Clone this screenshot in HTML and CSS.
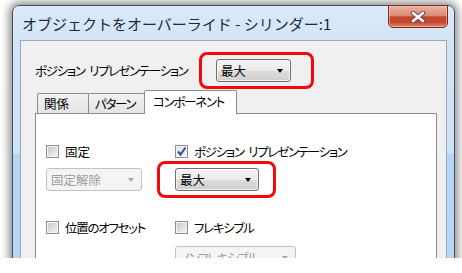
FILE: index.html
```html
<!DOCTYPE html>
<html lang="ja">
<head>
    <meta charset="UTF-8">
    <title>オブジェクトをオーバーライド - シリンダー:1</title>
    <link rel="stylesheet" href="styles.css">
</head>
<body>
<div class="screen">
    <div class="window">
        <div class="titlebar">
            <span class="title">オブジェクトをオーバーライド - シリンダー:1</span>
            <button class="close" type="button" aria-label="閉じる">
                <svg width="16" height="12" viewBox="0 0 16 12">
                    <path d="M3 2 L13 10 M13 2 L3 10" stroke="#6b4a44" stroke-width="4.6" stroke-linecap="round" fill="none"/>
                    <path d="M3 2 L13 10 M13 2 L3 10" stroke="#ffffff" stroke-width="2.6" stroke-linecap="round" fill="none"/>
                </svg>
            </button>
        </div>

        <div class="client">
            <div class="rep-row">
                <span class="rep-label">ポジション リプレゼンテーション</span>
                <div class="combo marked mark-top kanji">最大<i class="arrow"></i></div>
            </div>

            <div class="tabs">
                <div class="tab kanji">関係</div>
                <div class="tab">パターン</div>
                <div class="tab active">コンポーネント</div>
            </div>

            <div class="panel">
                <div class="group">
                    <label class="check kanji"><span class="box"></span>固定</label>
                    <div class="combo disabled w-fixed kanji">固定解除<i class="arrow"></i></div>
                </div>
                <div class="group">
                    <label class="check"><span class="box checked">
                        <svg width="11" height="11" viewBox="0 0 11 11"><path d="M2 5.5 L4.5 8.5 L9.5 1.5" stroke="#2f4f9c" stroke-width="2" fill="none"/></svg>
                    </span>ポジション リプレゼンテーション</label>
                    <div class="combo marked mark-panel w-rep kanji">最大<i class="arrow"></i></div>
                </div>
                <div class="group">
                    <label class="check"><span class="box"></span>位置のオフセット</label>
                </div>
                <div class="group wide-gap">
                    <label class="check"><span class="box"></span>フレキシブル</label>
                    <div class="combo disabled w-flex">ノンフレキシブル<i class="arrow"></i></div>
                </div>
            </div>
        </div>
    </div>
</div>
</body>
</html>
```

FILE: styles.css
```css
* {
    box-sizing: border-box;
}
body {
    margin: 0;
    background: #ffffff;
    font-family: "Noto Sans CJK JP", "Noto Sans", sans-serif;
    font-size: 12.5px;
    letter-spacing: -1.3px;
    word-spacing: 3px;
    color: #000;
    font-feature-settings: "palt";
}
.kanji {
    letter-spacing: 0;
}
.screen {
    height: 258px;
    overflow: hidden;
    padding: 5px 0 0 12px;
}

/* window frame */
.window {
    width: 443px;
    height: 320px;
    display: flex;
    flex-direction: column;
    padding: 0 7px;
    border: 1px solid #45505e;
    border-radius: 7px 7px 0 0;
    background: linear-gradient(180deg, #dbe9f8 0, #d2e4f6 40px, #cfe2f6 147px, #b6d4f4 148px, #b9d6f5 100%);
    box-shadow: 0 0 9px 3px rgba(0, 0, 0, 0.45);
}
.titlebar {
    height: 34px;
    display: flex;
    align-items: flex-start;
}
.title {
    margin: 9px 0 0 2px;
    font-size: 15px;
    line-height: 17px;
    letter-spacing: 0;
    word-spacing: 0;
    color: #1b2a40;
    font-feature-settings: normal;
}
.close {
    margin: -1px -1px 0 auto;
    width: 60px;
    height: 23px;
    padding: 0;
    display: flex;
    align-items: center;
    justify-content: center;
    border: 1px solid #7c2c21;
    border-radius: 0 0 5px 5px;
    background: linear-gradient(180deg, #eab1a3 0%, #de8d79 45%, #c6452d 52%, #c44a32 78%, #de8a6c 100%);
    box-shadow: inset 0 0 0 1px rgba(255, 210, 200, 0.5);
}
.client {
    flex: 1;
    background: #f0f0f0;
    border: 1px solid #9aa9bb;
}

/* top row */
.rep-row {
    display: flex;
    align-items: center;
    margin-top: 18px;
    padding-left: 14px;
}
.rep-label {
    width: 181px;
    white-space: nowrap;
}

/* combo boxes */
.combo {
    height: 23px;
    width: 75px;
    display: flex;
    align-items: center;
    justify-content: space-between;
    padding: 0 7px 0 4px;
    white-space: nowrap;
    border: 1px solid #707070;
    border-radius: 3px;
    background: linear-gradient(180deg, #f3f3f3 0%, #ebebeb 50%, #dddddd 51%, #cfcfcf 100%);
    box-shadow: inset 0 0 0 1px rgba(255, 255, 255, 0.7);
}
.arrow {
    width: 0;
    height: 0;
    border-left: 3.5px solid transparent;
    border-right: 3.5px solid transparent;
    border-top: 4px solid #000;
}
.combo.disabled {
    color: #9c9c9c;
    border-color: #c2c2c2;
    background: #f4f4f4;
    box-shadow: none;
}
.combo.disabled .arrow {
    border-top-color: #a8a8a8;
}
.w-fixed {
    width: 96px;
}
.w-rep {
    width: 84px;
}
.w-flex {
    width: 121px;
}

/* red annotation rings */
.marked {
    position: relative;
}
.marked::after {
    content: "";
    position: absolute;
    border: 3px solid #f20a0a;
    border-radius: 8px;
}
.mark-top::after {
    top: -8px;
    bottom: -8px;
    left: -18px;
    right: -24px;
}
.mark-panel::after {
    top: -8px;
    bottom: -8px;
    left: -19px;
    right: -18px;
}

/* tabs */
.tabs {
    display: flex;
    align-items: flex-end;
    height: 23px;
    margin: 8px 0 0 16px;
}
.tab {
    height: 20px;
    width: 52px;
    padding: 2px 0 0 6px;
    line-height: 16px;
    white-space: nowrap;
    border: 1px solid #898c95;
    border-bottom: none;
    border-radius: 2px 2px 0 0;
    background: linear-gradient(180deg, #f2f2f2 0%, #e4e4e4 100%);
}
.tab + .tab {
    margin-left: -1px;
    width: 57px;
}
.tab.active {
    width: 93px;
    height: 24px;
    margin-bottom: -1px;
    padding: 3px 0 0 8px;
    background: #ffffff;
    position: relative;
    z-index: 1;
}

/* tab page */
.panel {
    flex: 1;
    width: 402px;
    margin-left: 14px;
    padding: 29px 0 0 10px;
    background: #ffffff;
    border: 1px solid #898c95;
    display: grid;
    grid-template-columns: 129px 1fr;
    align-content: start;
    row-gap: 28px;
}
.group {
    display: flex;
    flex-direction: column;
    align-items: flex-start;
    gap: 8px;
}
.group.wide-gap {
    gap: 10px;
}
.check {
    height: 17px;
    display: flex;
    align-items: center;
    gap: 5px;
    white-space: nowrap;
}
.box {
    width: 13px;
    height: 13px;
    margin-right: 1px;
    display: flex;
    align-items: center;
    justify-content: center;
    border: 1px solid #8f8f8f;
    background: linear-gradient(135deg, #c6c6c6 0%, #e2e2e2 60%, #f2f2f2 100%);
    box-shadow: inset 0 0 0 1px #f4f4f4;
}
.box.checked {
    background: linear-gradient(135deg, #dde6f3 0%, #f4f6fa 100%);
}
```
